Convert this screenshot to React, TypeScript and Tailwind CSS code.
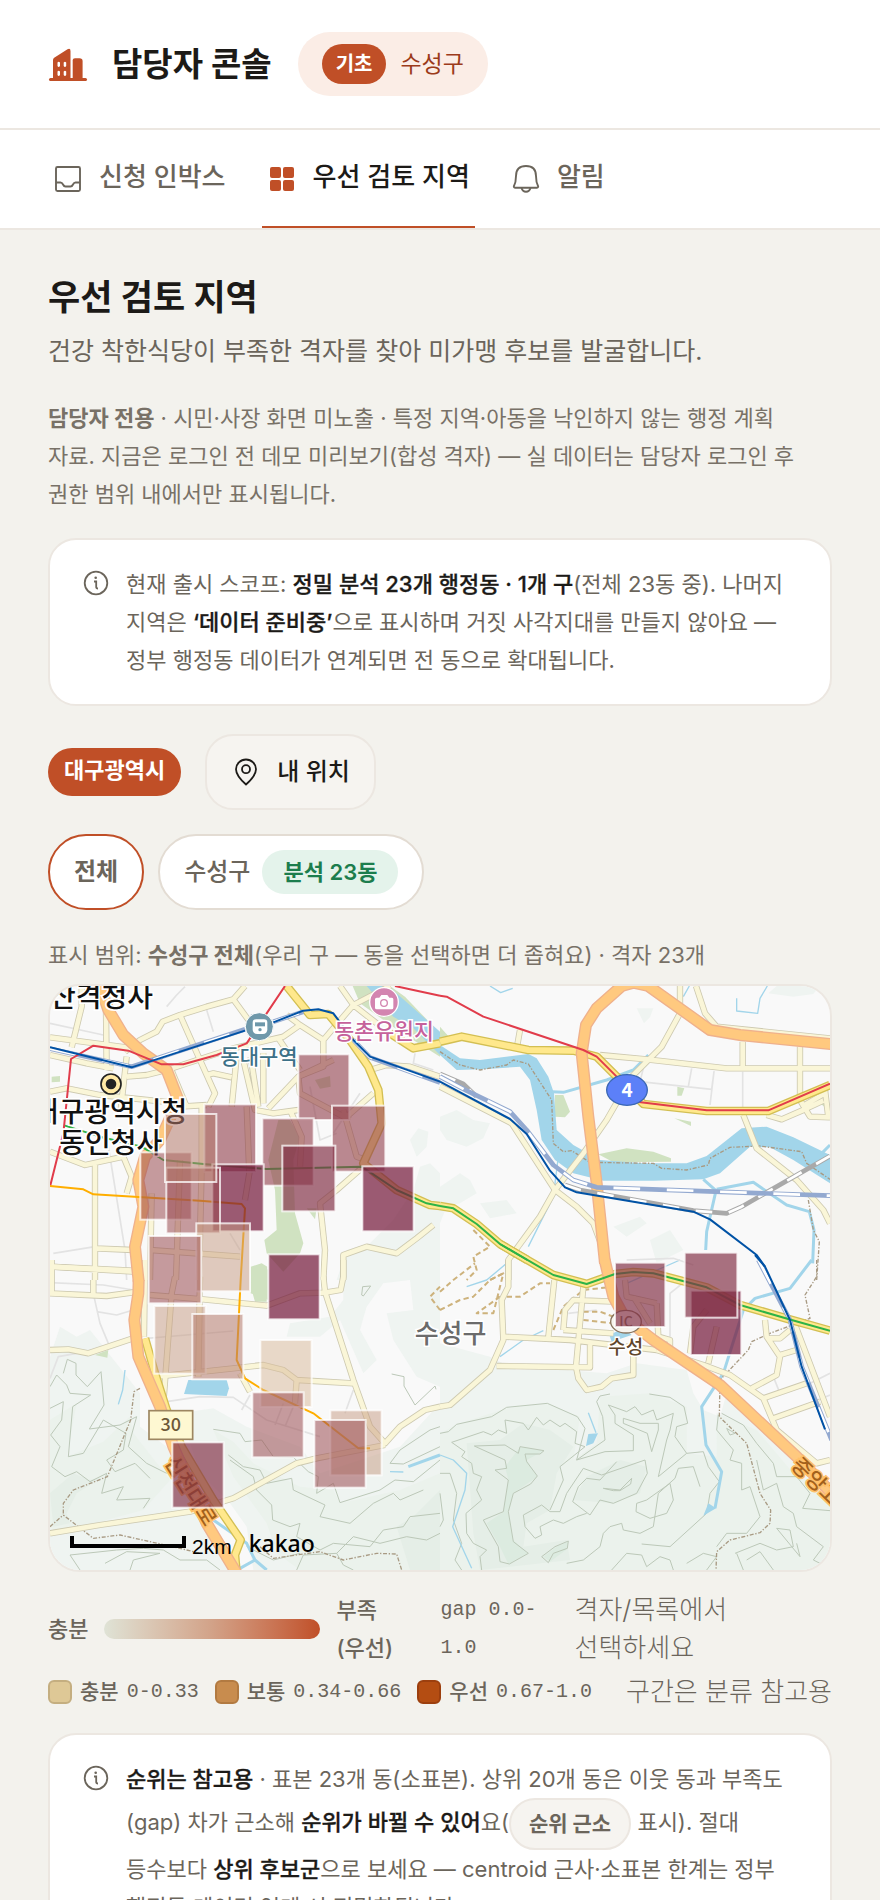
import type { ReactNode } from "react";

type TileName = "nw" | "ne" | "sw" | "se";
type Shape = [TileName, string];

// The map is drawn on four tiles, each with its own origin.
const TILES: Record<TileName, string> = {
  nw: "translate(-150 -78)",
  ne: "translate(1170 -168)",
  sw: "translate(-150 822)",
  se: "translate(1170 822)",
};

const woods: Shape[] = [
  ["nw", "M1320 640L1290 610L1260 620L1240 690L1180 780L1110 850L1040 870L1010 960L1320 960ZM1230 540L1255 505L1285 515L1280 560L1250 590Z"],
  ["ne", "M985 190L1010 168L1140 168L1120 192L1060 200ZM590 235L640 235L630 262L612 280ZM0 560L50 540L100 570L150 580L130 625L80 650L20 630L0 600ZM0 770L60 730L90 750L110 790L60 820L20 830L0 880ZM120 820L200 810L230 850L150 865ZM520 890L600 860L620 880L560 920ZM630 930L690 900L730 960L650 1000Z"],
  ["sw", "M1030 0L1320 0L1320 380L1250 350L1180 240L1160 160L1240 150L1230 60L1150 70L1100 140L1080 210L1130 300L1090 340L1020 180L960 230L860 230L870 190L990 170L1030 120Z"],
  ["sw", "M150 290L180 200L230 230L270 210L310 260L420 400L420 500L500 560L560 690L640 820L720 930L150 930Z"],
  ["sw", "M540 460L640 445L740 500L900 560L960 640L1200 560L1320 430L1320 930L760 930L740 800L690 730L600 640Z"],
  ["se", "M0 250L150 290L230 330L380 330L500 340L590 310L740 330L760 400L790 450L840 470L860 400L1060 590L1170 720L1170 930L0 930Z"],
];

const hills: Shape[] = [
  ["sw", "M150 480L230 430L200 590L310 545L390 470L400 520L510 660L430 750L320 780L170 820L150 800Z"],
  ["sw", "M640 510L700 545L760 610L900 680L1000 690L1020 730L1200 690L1320 640L1320 930L900 930L830 880L800 790L700 650Z"],
  ["se", "M0 520L60 490L200 445L320 430L420 470L400 600L470 550L480 410L630 400L740 440L740 580L830 590L830 460L950 510L1060 640L1170 700L1170 930L0 930Z"],
];

const peaks: Shape[] = [
  ["sw", "M150 700L220 640L270 660L310 650L230 700L200 760L210 790L160 800Z"],
  ["sw", "M1190 800L1240 770L1320 690L1320 930L1230 930Z"],
  ["se", "M80 550L180 540L250 490L330 510L400 560L350 640L330 750L260 790L250 860L380 840L390 900L120 930L100 820Z"],
  ["se", "M400 720L440 650L540 600L620 620L600 700L520 730Z"],
];

const summits: Shape[] = [
  ["se", "M240 562L312 572L260 600L292 650L220 700L205 760L220 840L262 880L205 912L180 860L140 790L190 755L205 660L195 620Z"],
  ["se", "M310 890L350 860L385 845L378 870L330 905Z"],
];

const contours: Shape[] = [
  ["sw", "M190 340L202 298L228 310L228 345L262 380L303 335L312 435L268 507L360 495L410 470L385 560L440 610L500 640"],
  ["sw", "M150 380L170 345L200 375L210 400L272 405L218 440L205 590L250 580L310 480L378 520L370 570L320 600L345 635L405 610L450 655"],
  ["sw", "M150 445L190 425L185 480L152 525L180 560L155 620L195 650L230 635L270 665L320 640L305 700L370 680L350 720L450 715L430 745"],
  ["sw", "M640 508L720 520L735 545L785 540L820 590L880 592L925 635L955 650L950 700L1000 670L1020 728L1140 690L1185 660L1240 665L1320 600"],
  ["sw", "M685 585L730 620L780 630L800 670L875 655L880 690L975 735L960 770L1050 790L1120 730L1180 700L1200 720L1270 690"],
  ["sw", "M690 600L760 650L770 690L815 735L818 780L870 800L900 790L890 830L960 870L1000 850L1110 860L1150 810L1210 800L1230 770L1320 760"],
  ["sw", "M1170 610L1200 570L1290 510L1320 500M1170 610L1210 612L1320 560M1175 342L1212 350L1212 378L1245 435L1305 378L1308 388"],
  ["sw", "M210 885L350 870L430 865L490 870L540 900L620 900L660 930M240 930L210 885M315 910L380 875L480 880L400 900L390 930"],
  ["sw", "M890 930L910 885L1010 880L1030 915L1060 930M1010 880L1060 830L1140 850L1220 830L1280 840L1320 820M740 860L820 900L900 880"],
  ["sw", "M1085 105L1088 80L1112 78L1090 108Z"],
  ["se", "M0 520L25 515L50 493L155 470L200 442L322 430L412 470L435 505L410 600L495 540L488 470L470 425L480 408L510 402"],
  ["se", "M628 402L690 412L732 440L743 490L710 500L705 530L740 580L790 575L805 620L838 665L810 700L800 760L690 860L605 852"],
  ["se", "M35 547L130 515L155 525L175 510L200 520L195 480L250 490L265 510L290 472L310 495L330 480L360 500L375 490L410 515L405 550L435 560L360 620L370 660L330 750"],
  ["se", "M35 547L75 575L65 590L95 610L100 640L125 650L110 690L125 720L78 760L80 820L100 850L140 870L120 890L125 930"],
  ["se", "M103 558L195 555L235 580L240 560L312 572L300 582L255 582L260 605L292 648L272 672L220 700L205 755L220 845L265 880L208 912L180 905L175 860L130 780L190 755L205 660L165 630L200 625L195 600Z"],
  ["se", "M330 755L360 755L380 700L430 625L485 645L615 600L622 640L590 700L520 730L480 720L450 765L398 725L415 680L440 655L480 660L530 605"],
  ["se", "M505 435L560 455L585 440L605 465L640 450L650 480L700 460L690 510L680 540L655 650L740 580M505 435L525 465L525 490L580 525L580 572L495 575L410 600"],
  ["se", "M550 475L600 490L655 490L655 510L635 575L622 520L550 490Z"],
  ["se", "M330 755L305 735L250 765L255 800L285 835L305 825L300 800L340 780L370 790L410 770L440 760"],
  ["se", "M590 730L620 720L690 670L700 720L680 760L630 775L588 755Z"],
  ["se", "M490 685L540 690L575 655L572 672L540 692L520 692Z"],
  ["se", "M305 890L345 860L385 843L382 865L340 880L325 908Z"],
  ["se", "M380 910L430 900L480 860L490 820L510 800L545 790L550 810L600 820L640 800L655 700L705 655L715 625L760 620L780 680"],
  ["se", "M515 930L560 880L605 885L620 920L660 890L690 900L700 930M740 910L790 880L830 890L800 930"],
  ["se", "M845 460L910 495L950 550L1000 610L1010 650L1070 650L1110 700L1088 745L1170 752"],
  ["se", "M835 465L830 510L880 570L870 600L905 610L905 690L930 680L960 770L920 820L860 820L830 860"],
  ["se", "M860 505L885 520L870 525ZM950 600L970 690L1010 670L1030 740L1060 760L1070 800L1150 860L1120 900L1170 925"],
  ["se", "M885 880L960 850L1010 870L1060 860L1050 810L1010 805L1080 890L1070 850M920 900L960 875L1000 930M890 880L910 930"],
  ["se", "M0 640L30 640L50 700L40 780L65 850L45 900L65 930M0 700L10 780L0 800"],
];

const parks: Shape[] = [
  ["nw", "M1058 78L1080 130L1200 215L1320 290L1320 220L1215 110L1170 78Z"],
  ["nw", "M835 480L870 480L900 530L880 600L885 760L910 850L900 880L850 935L800 880L793 840L830 810L825 690L805 600ZM752 930L780 912L805 930L805 1020L752 1000Z"],
  ["nw", "M945 360L990 348L992 380L960 386ZM155 350L180 348L180 365L155 367ZM920 745L950 745L945 778Z"],
  ["sw", "M752 20L785 10L802 20L800 125L765 125L755 90ZM285 285L325 270L322 293Z"],
  ["ne", "M475 673L560 655L640 665L693 685L693 695L520 697ZM345 495L370 495L390 545L375 562L345 560ZM703 565L753 575L753 588ZM712 470L733 475L725 497L712 497ZM0 290L40 335L0 340ZM1140 520L1165 515L1165 540Z"],
];

const water: Shape[] = [
  ["nw", "M1100 78L1165 78L1320 215L1320 285L1240 205L1180 170Z"],
  ["ne", "M0 345L60 385L120 390L265 372L290 385L325 440L342 490L350 600L400 645L480 690L610 700L740 700L800 678L905 595L980 590L1060 622L1170 675L1170 760L1060 690L990 652L930 650L840 730L790 748L640 752L490 752L400 730L345 690L305 630L290 540L270 450L240 410L130 418L50 420L0 375Z"],
  ["sw", "M565 360L680 360L687 385L680 408L552 402Z"],
  ["se", "M445 522L474 520L460 550L438 558ZM805 730L828 745L790 767ZM508 225L550 205L575 225L515 245Z"],
];

const streams: Shape[] = [
  ["ne", "M790 748L828 782L800 905L797 960M830 778L940 757L1040 825L1108 845L1122 900L1118 1000"],
  ["ne", "M335 485L370 487L500 450L580 420L625 375M1145 670L1170 645"],
  ["se", "M1115 0L1050 85L945 115L910 150L850 340L785 440L798 555L845 635L825 745"],
  ["sw", "M640 780L740 850L765 900L800 930M720 925L765 900M1225 620L1320 585"],
];

const brooks: Shape[] = [
  ["ne", "M150 168L182 188L218 175M982 168L960 205L953 250L890 243L890 205M748 168L730 200M355 680L340 800L265 950"],
  ["sw", "M375 330L368 390L355 433M1170 635L1210 636"],
  ["se", "M80 80L140 60L200 10M180 290L250 240L310 212M445 458L468 518M0 585L40 600L80 640L75 690L38 800L95 925M560 70L720 0"],
];

const lanes: Shape[] = [
  ["nw", "M150 190L310 225M620 150L640 215M500 140L530 105L555 80M322 540L375 870L380 960M160 880L285 860M930 380L960 540L1010 520M1080 400L1000 520M1245 280L1240 310L1300 330M690 820L720 870"],
  ["ne", "M610 415L600 455L815 478L822 425L810 525M755 415L745 470M908 425V540M560 990L700 985L760 1005"],
  ["sw", "M150 68L310 75L400 90M282 110L300 190L325 250M290 155L350 165L400 150M440 235L700 213M500 425L600 410L700 412L800 480L960 530M150 355L175 290L230 280M725 450L750 405M825 495L850 430M855 500L880 440M1060 390L1035 460"],
  ["se", "M690 230L690 100L740 60M1090 380L1170 340M1000 350L1020 400M1110 430L1170 405M385 160L470 150"],
];

const minorRoads: Shape[] = [
  ["nw", "M150 232L400 265M150 285L260 310L340 325M245 78L245 140L215 262M318 150L320 330M375 275L420 240L470 215L488 185L540 165L620 140L700 118L735 78"],
  ["nw", "M540 165L600 300L645 400L625 440M700 118L760 200M380 350L440 345L500 330L700 265L850 230L900 195M380 290L362 450M150 395L200 385L300 405L540 430M510 320L560 440M540 440L620 435"],
  ["nw", "M620 345L640 340L695 352M710 290L695 440M730 300L765 450L820 460L895 450M752 290L775 440M790 280L790 430M835 235L900 330M900 195L970 240L970 320L895 350L805 445M860 165L900 195M970 240L1060 135L1170 78M1020 78L1060 135L1130 190"],
  ["nw", "M895 350L1000 300M895 350L900 400L1050 480M150 575L255 615L370 590L395 650L380 700M285 615V960M285 865L400 870M150 920L400 935M605 440V620L597 960M540 600L528 960M455 700L450 960M740 440L748 640L735 720"],
  ["nw", "M870 450L905 530L900 620M1030 450L1070 590L1100 600M1120 400L1040 470M1090 620L1010 690L960 730L975 870L970 960M450 870L720 890M1030 960V885L1100 860L1190 880L1250 835L1300 795M1110 330L1160 315L1230 320L1320 350"],
  ["ne", "M720 168L720 250L665 350L575 440L500 570L430 670L345 780L300 860L205 990L205 1050M768 168L795 250L830 290L1170 325M480 375L620 388L860 415H1170M908 335V410M1080 350V510L1110 560L1170 562"],
  ["ne", "M1085 530L1155 490M980 555L1025 568L1090 540L1150 512M910 555L950 655L1070 750L1150 840L1170 880M0 470L215 580L345 780L410 830L460 880L490 960M240 300L232 345M1155 480L1165 562"],
  ["sw", "M150 20L400 32M280 60V100M150 100L320 108L400 97M155 0V100M150 270L205 268L265 280L400 235M435 0L432 230M525 50L515 100L490 430M600 50L595 350M450 105L610 118L800 137L900 100L975 98L1022 90L1030 50V0"],
  ["sw", "M970 50L975 95L1060 360L1110 500L1155 550L1200 500L1275 450L1320 440M470 350L700 325L790 315L850 330L890 360L1060 370M890 360L885 430M720 340L750 395M150 820L300 795L570 755L700 715L890 610L950 595L1155 555"],
  ["se", "M205 0L205 80L185 120L190 240L150 330L30 435L0 440M190 230L390 240L650 270M343 60L325 232M430 80L408 320M170 318L450 322L450 245M370 210L520 220M370 210L375 150L400 120L520 125"],
  ["se", "M408 320L415 355L440 390L485 380L515 355L580 345V270M650 130L655 230L690 240V270M555 60L560 110L650 130M580 110L630 190M750 280L760 200L800 150M805 310L830 200M650 270L790 315L870 345L970 415L1010 510L1130 610L1170 600"],
  ["se", "M935 385L1010 345L1020 290L980 230L975 180M980 235L1020 235L1050 210M1020 285L1070 270M1060 180L1170 470M970 415L1100 370M1000 475L1140 425"],
];

const mainRoads: Shape[] = [
  ["nw", "M860 78L930 165L985 162L1050 240L1105 320L1135 390L1145 490L1090 610L1190 690L1290 735L1320 738M1170 220L1240 265L1320 250"],
  ["ne", "M0 335L65 320L265 360L400 362L470 380L530 440L610 522L800 543H985L1170 465M0 828L40 835L110 882L180 942L262 990"],
  ["se", "M180 -48L340 45L440 72L525 42L580 36L640 40L800 82L900 135L1055 180L1170 212"],
  ["sw", "M435 235L465 340L500 450L545 560L640 720L722 840L705 885L710 940"],
];

const highways: Shape[] = [
  ["nw", "M300 78L325 150L370 225L430 280L500 330L535 420L480 540L435 590L415 660L430 740L405 860L416 965"],
  ["sw", "M416 60L415 100L403 180L415 290L480 440L520 560L620 790L710 940"],
  ["ne", "M495 1000L470 760L445 560L425 370L438 285L470 235L545 168L580 158L625 168L810 300L900 315L1180 343"],
  ["se", "M494 0L520 110L555 175L640 240L840 375L1070 590L1180 705"],
];

const trails: Shape[] = [
  ["ne", "M0 365L60 405L120 420L200 405L220 390L265 402L335 510L340 640L370 665L395 662L450 697L640 700L665 715L740 720L805 705L810 685L870 652L960 648L1085 665L1100 700L1170 748M1105 810L1120 900L1138 935L1130 1050"],
  ["se", "M1130 0L1130 50L1095 105L1110 175L990 220L935 245L925 270L840 360L838 470L920 550L960 700L992 750L990 790L960 818L870 840L830 875L828 930"],
  ["sw", "M420 385L402 395L392 480L322 650L220 690L190 730L190 765L280 835L360 825L540 865L600 880M150 800L190 765M780 860L820 895L960 875L1030 900L1130 880L1190 882L1205 930"],
];

const footpaths: Shape[] = [
  ["sw", "M1320 150L1290 110L1320 80"],
  ["se", "M0 150L60 120L100 110L150 60L190 40L160 160L110 160L180 110M200 110L240 110L300 70L330 70M0 95L40 60L105 10M340 210L370 140L430 90L520 80M430 155L480 155L520 170M430 180L520 190M330 232L400 235"],
  ["ne", "M100 900L150 950L100 980L110 1020L80 1050M150 1050L190 1030"],
];

const railway: Shape[] = [
  ["nw", "M150 266L395 320L735 208M820 185L910 155M1060 240L1110 292L1320 368"],
  ["ne", "M0 440L80 482L210 545L260 600L340 705L400 750L470 772L1170 797"],
  ["se", "M955 0L1050 180L1085 320L1175 540"],
];

const greyRailway: Shape[] = [
  ["ne", "M0 432L70 462L110 500M375 765L420 780L760 842L860 850L905 830L1170 678"],
];

const metro: { stroke: string; shapes: Shape[] }[] = [
  {
    stroke: "#e13c4b",
    shapes: [
      ["nw", "M855 78L800 160L740 250L650 285L550 313H485L385 272L280 257L213 297L190 520L150 680M1185 78L1240 90L1320 107"],
      ["ne", "M0 197L20 200L130 260L430 360L470 380L530 440M590 515L800 541H985L1170 461"],
    ],
  },
  {
    stroke: "#2eb347",
    shapes: [
      ["nw", "M195 497L300 530L425 560L490 600L610 612L800 627L1085 620L1190 690L1280 730L1320 738"],
      ["ne", "M0 828L40 835L110 882L180 942L262 990"],
      ["se", "M180 -48L340 45L440 72L525 42L580 36L640 40L800 82L900 135L1055 180L1170 212"],
    ],
  },
  {
    stroke: "#ffae00",
    shapes: [
      ["nw", "M150 678L250 688L280 703L600 722L725 732L735 745L722 960"],
      ["sw", "M722 60L710 300L735 355L790 390L940 460L1075 565H1110"],
    ],
  },
  {
    stroke: "#0052a5",
    shapes: [
      ["nw", "M150 262L395 322L735 212M820 187L910 152L955 148L1000 160L1060 240L1110 290L1320 365"],
      ["ne", "M0 455L210 567L260 612L330 722L375 772L410 787L760 845L810 868L950 975L975 1010"],
      ["se", "M945 -15L975 20L1050 180L1085 320L1155 508"],
    ],
  },
];

const LEVELS = [
  { fill: "#d7b797", opacity: 0.5 },
  { fill: "#c59a82", opacity: 0.5 },
  { fill: "#b47a6b", opacity: 0.55 },
  { fill: "#9b4c52", opacity: 0.55 },
  { fill: "#903c49", opacity: 0.6 },
  { fill: "#822f45", opacity: 0.68 },
  { fill: "#761c3d", opacity: 0.72 },
];

const cells: [TileName, number, number, number, number, number][] = [
  ["nw", 895, 283, 153, 197, 4],
  ["nw", 613, 433, 155, 203, 4],
  ["nw", 421, 577, 154, 202, 3],
  ["nw", 787, 475, 154, 202, 4],
  ["nw", 637, 613, 154, 201, 6],
  ["nw", 499, 623, 161, 197, 3],
  ["nw", 495, 462, 154, 204, 2],
  ["nw", 996, 437, 160, 198, 4],
  ["nw", 847, 557, 159, 197, 5],
  ["nw", 1087, 619, 154, 195, 6],
  ["nw", 589, 790, 161, 204, 1],
  ["nw", 446, 828, 158, 202, 3],
  ["nw", 805, 883, 154, 195, 6],
  ["sw", 463, 138, 154, 203, 1],
  ["sw", 577, 162, 153, 196, 2],
  ["sw", 781, 240, 154, 201, 0],
  ["sw", 757, 397, 154, 195, 3],
  ["sw", 991, 451, 154, 195, 1],
  ["sw", 943, 480, 154, 203, 3],
  ["sw", 517, 547, 154, 196, 5],
  ["se", 525, 8, 151, 193, 5],
  ["se", 752, 92, 152, 193, 6],
  ["se", 734, -22, 158, 195, 5],
];

const Shapes = ({ shapes }: { shapes: Shape[] }) => (
  <>
    {shapes.map(([tile, d]) => (
      <path key={tile + d} transform={TILES[tile]} d={d} />
    ))}
  </>
);

const Lines = ({
  shapes,
  color,
  width,
  dash,
}: {
  shapes: Shape[];
  color: string;
  width: number;
  dash?: string;
}) => (
  <g
    fill="none"
    stroke={color}
    strokeWidth={width}
    strokeDasharray={dash}
    strokeLinejoin="round"
  >
    <Shapes shapes={shapes} />
  </g>
);

const GridMap = () => {
  return (
    <svg
      viewBox="0 0 2340 1752"
      preserveAspectRatio="xMidYMid slice"
      role="img"
      aria-label="수성구 격자 지도"
      className="block h-[584px] w-full bg-[#f9f9f9] font-['Noto_Sans_CJK_KR',sans-serif]"
    >
      <g fill="#eff4f1">
        <Shapes shapes={woods} />
      </g>
      <g fill="#ebf2ec">
        <Shapes shapes={hills} />
      </g>
      <g fill="#e5eee7">
        <Shapes shapes={peaks} />
      </g>
      <g fill="#dcebe0">
        <Shapes shapes={summits} />
      </g>
      <Lines shapes={contours} color="#bcc8b8" width={3} />
      <g fill="#d0e2c1">
        <Shapes shapes={parks} />
      </g>
      <g fill="#a2d5ea">
        <Shapes shapes={water} />
      </g>
      <Lines shapes={streams} color="#a2d5ea" width={9} />
      <Lines shapes={brooks} color="#a2d5ea" width={4} />
      <Lines shapes={lanes} color="#e3e3e3" width={5} />
      <Lines shapes={trails} color="#a89a83" width={4} dash="12 5 4 5" />
      <Lines shapes={footpaths} color="#cdb27c" width={6} dash="16 10" />
      <Lines shapes={minorRoads} color="#cdc9b0" width={19} />
      <Lines shapes={minorRoads} color="#faf6d8" width={14} />
      <Lines shapes={mainRoads} color="#d3bf53" width={26} />
      <Lines shapes={mainRoads} color="#ffe88c" width={18} />
      <Lines shapes={highways} color="#efb18c" width={36} />
      <Lines shapes={highways} color="#ffc97f" width={28} />
      <Lines shapes={greyRailway} color="#a9a9a9" width={14} />
      <Lines shapes={greyRailway} color="#ffffff" width={8} dash="50 50" />
      <Lines shapes={railway} color="#93a9d0" width={14} />
      <Lines shapes={railway} color="#ffffff" width={8} dash="80 80" />
      {metro.map(({ stroke, shapes }) => (
        <Lines key={stroke} shapes={shapes} color={stroke} width={6} />
      ))}

      <g transform={TILES.nw}>
        <g
          fill="#111111"
          stroke="#ffffff"
          strokeWidth="10"
          paintOrder="stroke"
          className="text-[84px] font-medium"
        >
          <text x="150" y="141">산격청사</text>
          <text x="98" y="487">대구광역시청</text>
          <text x="178" y="578">동인청사</text>
        </g>
        <circle cx="333" cy="372" r="30" fill="#ffe9a6" stroke="#222" strokeWidth="5" />
        <circle cx="333" cy="372" r="16" fill="#222" />
        <circle cx="778" cy="200" r="42" fill="#6f98aa" stroke="#fff" strokeWidth="3" />
        <path
          d="M768 178H792Q802 178 802 188V208Q802 222 788 222H772Q758 222 758 208V188Q758 178 768 178Z"
          fill="#fff"
        />
        <path d="M765 187H795V199H765Z" fill="#6f98aa" />
        <circle cx="780" cy="209" r="5" fill="#6f98aa" />
        <circle cx="1152" cy="126" r="43" fill="#d385b0" stroke="#fff" strokeWidth="4" />
        <path
          d="M1130 113H1138L1144 105H1162L1168 113H1176Q1180 113 1180 118V143Q1180 148 1175 148H1130Q1125 148 1125 143V118Q1125 113 1130 113Z"
          fill="#fff"
        />
        <circle cx="1152" cy="129" r="10" fill="none" stroke="#d385b0" strokeWidth="4" />
        <g stroke="#ffffff" strokeWidth="9" paintOrder="stroke" className="text-[63px] font-medium">
          <text x="661" y="311" fill="#3d7188">동대구역</text>
          <text x="1003" y="237" fill="#c5619b" className="text-[65px]">동촌유원지</text>
        </g>
      </g>

      <g transform={TILES.ne}>
        <ellipse cx="561" cy="480" rx="61" ry="46" fill="#5c80f8" stroke="#3a67b4" strokeWidth="4" />
        <text x="561" y="500" textAnchor="middle" fill="#fff" className="text-[57px] font-bold">
          4
        </text>
      </g>

      <g transform={TILES.sw}>
        <rect x="447" y="452" width="131" height="86" fill="#fef8d2" stroke="#9d8661" strokeWidth="5" />
        <text x="512" y="514" textAnchor="middle" fill="#6d5938" className="text-[54px] font-medium">
          30
        </text>
        <text
          transform="translate(492 606) rotate(58)"
          fill="#a3611b"
          stroke="#ffc069"
          strokeWidth="10"
          paintOrder="stroke"
          className="text-[63px] font-medium"
        >
          신천대로
        </text>
      </g>

      <g transform={TILES.se}>
        <ellipse cx="558" cy="185" rx="46" ry="34" fill="#f7f4ee" stroke="#8a755f" strokeWidth="4" />
        <text x="558" y="200" textAnchor="middle" fill="#8a755f" className="text-[42px] font-medium">
          IC
        </text>
        <g stroke="#ffffff" strokeWidth="9" paintOrder="stroke" className="font-medium">
          <text x="505" y="282" fill="#5f462c" className="text-[57px]">수성</text>
          <text x="-76" y="250" fill="#6b6b6b" className="text-[78px]">수성구</text>
        </g>
        <text
          transform="translate(1050 620) rotate(44)"
          fill="#a3611b"
          stroke="#ffc069"
          strokeWidth="10"
          paintOrder="stroke"
          className="text-[63px] font-medium"
        >
          중앙고속도로
        </text>
      </g>

      {cells.map(([tile, x, y, width, height, level]) => (
        <rect
          key={`${tile}-${x}-${y}`}
          transform={TILES[tile]}
          x={x}
          y={y}
          width={width}
          height={height}
          fill={LEVELS[level].fill}
          fillOpacity={LEVELS[level].opacity}
          stroke="#fff"
          strokeOpacity="0.75"
          strokeWidth="6"
        />
      ))}

      <g transform={TILES.sw}>
        <path d="M216 828V858H552V828" fill="none" stroke="#000" strokeWidth="12" />
        <text x="576" y="882" className="font-['Liberation_Sans',sans-serif] text-[63px]">
          2km
        </text>
        <text x="746" y="875" className="font-['Noto_Sans',sans-serif] text-[69px] font-medium">
          kakao
        </text>
      </g>
    </svg>
  );
};

const BuildingIcon = () => (
  <svg viewBox="0 0 40 40" className="h-10 w-10 shrink-0" fill="#c04f27" aria-hidden="true">
    <path
      fillRule="evenodd"
      d="M5 34.500V16Q5 14.500 6.200 13.800L19.500 5.200Q22.500 3.700 22.500 7V34.500ZM9.500 18.500V22Q10.500 24 12 22V18.500Q10.500 17 9.500 18.500ZM15.700 18.500V22Q17 24 18.200 22V18.500Q17 17 15.700 18.500ZM9.500 27.500V31Q10.500 33 12 31V27.500Q10.500 26 9.500 27.500ZM15.700 27.500V31Q17 33 18.200 31V27.500Q17 26 15.700 27.500Z"
    />
    <path d="M24.700 34.500V16Q24.700 14.200 27 14.200H31.500Q34.600 14.200 34.600 17V34.500Z" />
    <rect x="1" y="34" width="38" height="3" rx="1.500" />
  </svg>
);

const InboxIcon = () => (
  <svg viewBox="0 0 30 30" className="h-[30px] w-[30px]" fill="none" stroke="#6b655b" strokeWidth="1.900" aria-hidden="true">
    <rect x="3" y="4" width="24" height="24" rx="1.500" />
    <path d="M3 19.500H7.500Q9 19.500 10 21.500T12.500 23.500H17.500Q19 23.500 20 21.500T22.500 19.500H27" />
  </svg>
);

const GridIcon = () => (
  <svg viewBox="0 0 30 30" className="h-[30px] w-[30px]" fill="#c04f27" aria-hidden="true">
    <rect x="3" y="4" width="11" height="11" rx="2" />
    <rect x="16" y="4" width="11" height="11" rx="2" />
    <rect x="3" y="17" width="11" height="11" rx="2" />
    <rect x="16" y="17" width="11" height="11" rx="2" />
  </svg>
);

const BellIcon = () => (
  <svg viewBox="0 0 30 30" className="h-[30px] w-[30px]" fill="none" stroke="#6b655b" strokeWidth="1.900" strokeLinejoin="round" aria-hidden="true">
    <path d="M2.800 23.500Q5 19.500 5 13Q5 3 15 3T25 13Q25 19.500 27.200 23.500Q27.200 24.700 26 24.700H4Q2.800 24.700 2.800 23.500Z" />
    <path d="M10.500 24.700Q11.500 28.700 15 28.700T19.500 24.700" />
  </svg>
);

const PinIcon = () => (
  <svg viewBox="0 0 30 30" className="h-[30px] w-[30px]" fill="none" stroke="#1c1a17" strokeWidth="1.800" aria-hidden="true">
    <path d="M15 27.500Q5 18.500 5 12.200A10 9.700 0 0 1 25 12.200Q25 18.500 15 27.500Z" strokeLinejoin="round" />
    <circle cx="15" cy="12.200" r="4" />
  </svg>
);

const InfoIcon = () => (
  <svg viewBox="0 0 28 28" className="mt-1 h-7 w-7 shrink-0" fill="none" stroke="#6b655b" strokeWidth="1.800" aria-hidden="true">
    <circle cx="14" cy="14" r="11.300" />
    <path d="M12 12.500H14.200V18Q14.200 19.500 16 19.500" />
    <circle cx="13.700" cy="8.800" r="1.300" fill="#6b655b" stroke="none" />
  </svg>
);

const Strong = ({ children }: { children: ReactNode }) => (
  <strong className="font-medium text-[#1c1a17] [-webkit-text-stroke:0.3px_#1c1a17]">{children}</strong>
);

const Notice = ({ children }: { children: ReactNode }) => (
  <section className="flex gap-4 rounded-[28px] border-2 border-[#ece7e1] bg-white px-8 py-[25px]">
    <InfoIcon />
    <p className="text-[22px] leading-[38px] break-keep text-[#6b655b]">{children}</p>
  </section>
);

const tabs = [
  { label: "신청 인박스", icon: <InboxIcon />, active: false },
  { label: "우선 검토 지역", icon: <GridIcon />, active: true },
  { label: "알림", icon: <BellIcon />, active: false },
];

const bands = [
  { label: "충분", range: "0-0.33", swatch: "border-[#c4ae80] bg-[#dec896]" },
  { label: "보통", range: "0.34-0.66", swatch: "border-[#b27a41] bg-[#c88c4e]" },
  { label: "우선", range: "0.67-1.0", swatch: "border-[#9c3f0e] bg-[#b44d12]" },
];

const App = () => {
  return (
    <div className="h-screen overflow-hidden bg-[#f3f2ed] font-['Inter','Noto_Sans_CJK_KR',sans-serif] text-[#6b655b]">
      <header className="flex h-[130px] items-center border-b-2 border-[#ece7e1] bg-white px-12">
        <BuildingIcon />
        <h1 className="ml-6 text-[33px] leading-[48px] font-bold text-[#1c1a17]">담당자 콘솔</h1>
        <div className="ml-[26px] flex h-16 items-center gap-3.5 rounded-full bg-[#fbede6] px-6">
          <span className="flex h-10 items-center rounded-full bg-[#c04f27] px-3.5 text-[20px] font-bold text-white">
            기초
          </span>
          <span className="text-[23px] text-[#9c3b1b]">수성구</span>
        </div>
      </header>

      <nav className="flex h-[100px] gap-[31px] border-b-2 border-[#ece7e1] bg-white px-12">
        {tabs.map(({ label, icon, active }) => (
          <a
            key={label}
            href="#"
            aria-current={active ? "page" : undefined}
            className={`flex items-center gap-4 border-b-2 px-[5px] text-[26px] font-medium ${
              active ? "border-[#c04f27] text-[#1c1a17]" : "border-transparent"
            }`}
          >
            {icon}
            <span className="pb-1">{label}</span>
          </a>
        ))}
      </nav>

      <main className="px-12 pt-[41px]">
        <h2 className="text-[35px] leading-[52px] font-bold text-[#1c1a17]">우선 검토 지역</h2>
        <p className="mt-2 text-[25px] leading-[40px]">
          건강 착한식당이 부족한 격자를 찾아 미가맹 후보를 발굴합니다.
        </p>
        <p className="mt-7 pr-5 text-[22px] leading-[38px] break-keep text-[#787167]">
          <strong className="font-bold">담당자 전용</strong> · 시민·사장 화면 미노출 · 특정
          지역·아동을 낙인하지 않는 행정 계획 자료. 지금은 로그인 전 데모 미리보기(합성 격자) — 실
          데이터는 담당자 로그인 후 권한 범위 내에서만 표시됩니다.
        </p>

        <div className="mt-[25px]">
          <Notice>
            현재 출시 스코프: <Strong>정밀 분석 23개 행정동 · 1개 구</Strong>(전체 23동 중). 나머지
            지역은 <Strong>‘데이터 준비중’</Strong>으로 표시하며 거짓 사각지대를 만들지 않아요 —
            정부 행정동 데이터가 연계되면 전 동으로 확대됩니다.
          </Notice>
        </div>

        <div className="mt-7 flex items-center gap-6">
          <span className="flex h-12 items-center rounded-full bg-[#c04f27] px-4 pb-1 text-[22px] font-bold text-white">
            대구광역시
          </span>
          <button
            type="button"
            className="flex h-[76px] items-center gap-4 rounded-[28px] border-2 border-[#ece7e1] bg-[#f6f4f0] px-6 text-[24px] font-medium text-[#1c1a17]"
          >
            <PinIcon />
            내 위치
          </button>
        </div>

        <div className="mt-6 flex gap-3.5">
          <button
            type="button"
            className="flex h-[76px] items-center rounded-full border-2 border-[#c04f27] bg-white px-6 text-[24px] font-bold"
          >
            전체
          </button>
          <button
            type="button"
            className="flex h-[76px] items-center gap-3 rounded-full border-2 border-[#e3dcd3] bg-white px-6 text-[24px] font-medium"
          >
            수성구
            <span className="flex h-11 items-center rounded-full bg-[#e4f3eb] px-[21px] text-[22px] font-semibold text-[#1c7d4d]">
              분석 23동
            </span>
          </button>
        </div>

        <p className="mt-[26px] text-[22px] leading-[38px] text-[#787167]">
          표시 범위: <strong className="font-bold">수성구 전체</strong>(우리 구 — 동을 선택하면 더
          좁혀요) · 격자 23개
        </p>

        <div className="mt-2.5 overflow-hidden rounded-[32px] border-2 border-[#ece7e1]">
          <GridMap />
        </div>

        <div className="mt-[19px] flex items-center gap-4 text-[22px] leading-[38px]">
          <span className="shrink-0 font-medium">충분</span>
          <span className="h-5 w-[216px] shrink-0 rounded-full bg-linear-to-r from-[#dfe3d6] via-[#d2a288] to-[#c04f27]" />
          <span className="w-[88px] font-medium break-keep">부족 (우선)</span>
          <span className="w-[118px] font-['Liberation_Mono',monospace] text-[20px]">
            gap 0.0-
            <br />
            1.0
          </span>
          <span className="w-44 text-[26px] font-light break-keep text-[#6b655b]">
            격자/목록에서 선택하세요
          </span>
        </div>

        <div className="mt-2 flex items-center justify-between text-[21px] leading-[34px]">
          <ul className="flex gap-4">
            {bands.map(({ label, range, swatch }) => (
              <li key={label} className="flex items-center gap-2">
                <span className={`h-6 w-6 rounded-md border-2 ${swatch}`} />
                <span className="font-medium">{label}</span>
                <span className="font-['Liberation_Mono',monospace] text-[20px]">{range}</span>
              </li>
            ))}
          </ul>
          <span className="text-[26px] font-light whitespace-nowrap">구간은 분류 참고용</span>
        </div>

        <div className="mt-6">
          <Notice>
            <Strong>순위는 참고용</Strong> · 표본 23개 동(소표본). 상위 20개 동은 이웃 동과
            부족도(gap) 차가 근소해 <Strong>순위가 바뀔 수 있어</Strong>요(
            <span className="inline-flex h-[52px] items-center rounded-full border-2 border-[#ece7e1] bg-[#f6f4f0] px-[18px] align-middle text-[21px] font-bold">
              순위 근소
            </span>{" "}
            표시). 절대 등수보다 <Strong>상위 후보군</Strong>으로 보세요 — centroid 근사·소표본
            한계는 정부 행정동 데이터 연계 시 정밀화됩니다.
          </Notice>
        </div>
      </main>
    </div>
  );
};

export default App;
